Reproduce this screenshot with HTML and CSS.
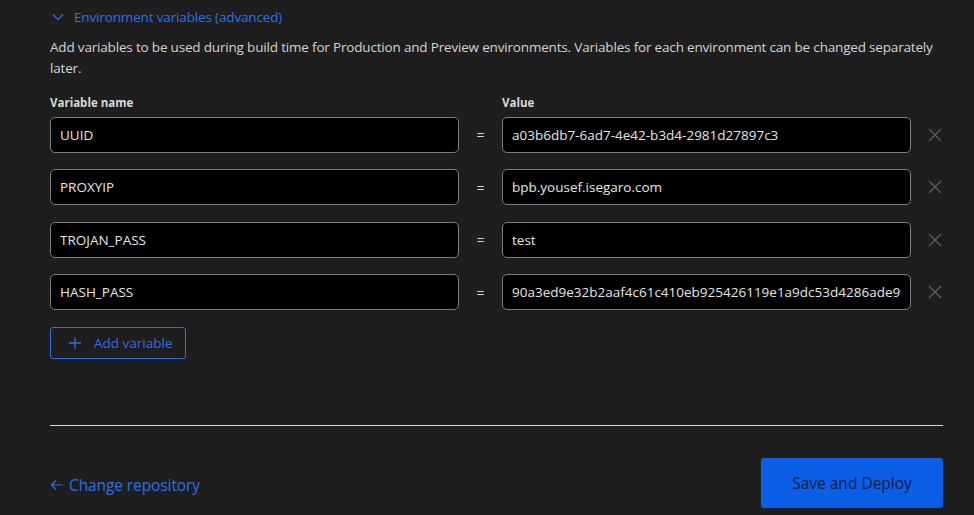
FILE: index.html
```html
<!DOCTYPE html>
<html>
<head>
<meta charset="utf-8">
<link rel="stylesheet" href="styles.css">
</head>
<body>
<div class="page">
  <div class="toggle">
    <svg class="chev" width="12" height="8" viewBox="0 0 12 8"><path d="M1 1.5 L6 6.5 L11 1.5" fill="none" stroke="#2f6fe6" stroke-width="1.2"/></svg>
    <span>Environment variables (advanced)</span>
  </div>
  <p class="desc">Add variables to be used during build time for Production and Preview environments. Variables for each environment can be changed separately later.</p>
  <div class="grid">
    <div class="label">Variable name</div>
    <div></div>
    <div class="label">Value</div>
    <div></div>

    <div class="field">UUID</div>
    <div class="eq">=</div>
    <div class="field">a03b6db7-6ad7-4e42-b3d4-2981d27897c3</div>
    <div class="rm"><svg width="14" height="14" viewBox="0 0 14 14"><path d="M1 1 L13 13 M13 1 L1 13" stroke="#5c5c5c" stroke-width="1.3"/></svg></div>

    <div class="field">PROXYIP</div>
    <div class="eq">=</div>
    <div class="field">bpb.yousef.isegaro.com</div>
    <div class="rm"><svg width="14" height="14" viewBox="0 0 14 14"><path d="M1 1 L13 13 M13 1 L1 13" stroke="#5c5c5c" stroke-width="1.3"/></svg></div>

    <div class="field">TROJAN_PASS</div>
    <div class="eq">=</div>
    <div class="field">test</div>
    <div class="rm"><svg width="14" height="14" viewBox="0 0 14 14"><path d="M1 1 L13 13 M13 1 L1 13" stroke="#5c5c5c" stroke-width="1.3"/></svg></div>

    <div class="field">HASH_PASS</div>
    <div class="eq">=</div>
    <div class="field"><span class="clip">90a3ed9e32b2aaf4c61c410eb925426119e1a9dc53d4286ade99a3f</span></div>
    <div class="rm"><svg width="14" height="14" viewBox="0 0 14 14"><path d="M1 1 L13 13 M13 1 L1 13" stroke="#5c5c5c" stroke-width="1.3"/></svg></div>
  </div>
  <button class="add"><svg width="12" height="12" viewBox="0 0 12 12"><path d="M6 0 V12 M0 6 H12" stroke="#2f6fe6" stroke-width="1.3"/></svg><span>Add variable</span></button>
  <div class="divider"></div>
  <div class="footer">
    <a class="back"><svg width="13" height="12" viewBox="0 0 13 12"><path d="M12.5 6 H1.5 M6 1.5 L1.5 6 L6 10.5" fill="none" stroke="#2f6fe6" stroke-width="1.2"/></svg><span>Change repository</span></a>
    <button class="deploy">Save and Deploy</button>
  </div>
</div>
</body>
</html>
```
FILE: styles.css
```css
html, body {
  margin: 0;
  padding: 0;
  background: #1e1e1e;
}
body {
  font-family: "Open Sans", "Noto Sans", sans-serif;
  color: #d6d6d6;
  width: 974px;
  height: 515px;
  overflow: hidden;
}
.page {
  width: 893px;
  padding: 6px 0 0 50px;
}
.toggle {
  display: flex;
  align-items: center;
  gap: 10px;
  padding-left: 2px;
  height: 22px;
  color: #2f6fe6;
  font-size: 13.5px;
  letter-spacing: -0.15px;
}
.desc {
  margin: 9px 0 0 0;
  font-size: 13.5px;
  letter-spacing: -0.18px;
  line-height: 21px;
  color: #d4d4d4;
}
.grid {
  margin-top: 16px;
  display: grid;
  grid-template-columns: 409px 43px 409px 32px;
  row-gap: 16.6px;
  align-items: center;
}
.label {
  font-size: 11.5px;
  font-weight: 700;
  color: #d8d8d8;
  margin-bottom: -10px;
  align-self: end;
}
.field {
  height: 36px;
  box-sizing: border-box;
  border: 1px solid #7d7d7d;
  border-radius: 5px;
  background: #000;
  color: #e6e6e6;
  font-size: 13.5px;
  padding: 0 9px;
  display: flex;
  align-items: center;
  white-space: nowrap;
  overflow: hidden;
}
.clip {
  display: block;
  overflow: hidden;
  text-overflow: clip;
}
.eq {
  text-align: center;
  font-size: 14px;
  color: #d6d6d6;
}
.rm {
  display: flex;
  justify-content: flex-end;
  padding-right: 1px;
}
.add {
  margin-top: 17px;
  display: flex;
  align-items: center;
  gap: 13px;
  height: 32px;
  width: 136px;
  padding: 0 0 0 18px;
  box-sizing: border-box;
  background: transparent;
  border: 1px solid #2f6fe6;
  border-radius: 3px;
  color: #2f6fe6;
  font-family: inherit;
  font-size: 13.5px;
}
.divider {
  margin-top: 66px;
  height: 1px;
  background: #d9d9d9;
}
.footer {
  margin-top: 32px;
  display: flex;
  justify-content: space-between;
  align-items: center;
}
.back {
  display: flex;
  align-items: center;
  gap: 6px;
  color: #2f6fe6;
  font-size: 15.5px;
  letter-spacing: -0.1px;
  margin-top: 4px;
}
.deploy {
  width: 182px;
  height: 50px;
  background: #0a5fe6;
  border: none;
  border-radius: 3px;
  color: #0b1c48;
  font-family: inherit;
  font-size: 15.5px;
}
```
